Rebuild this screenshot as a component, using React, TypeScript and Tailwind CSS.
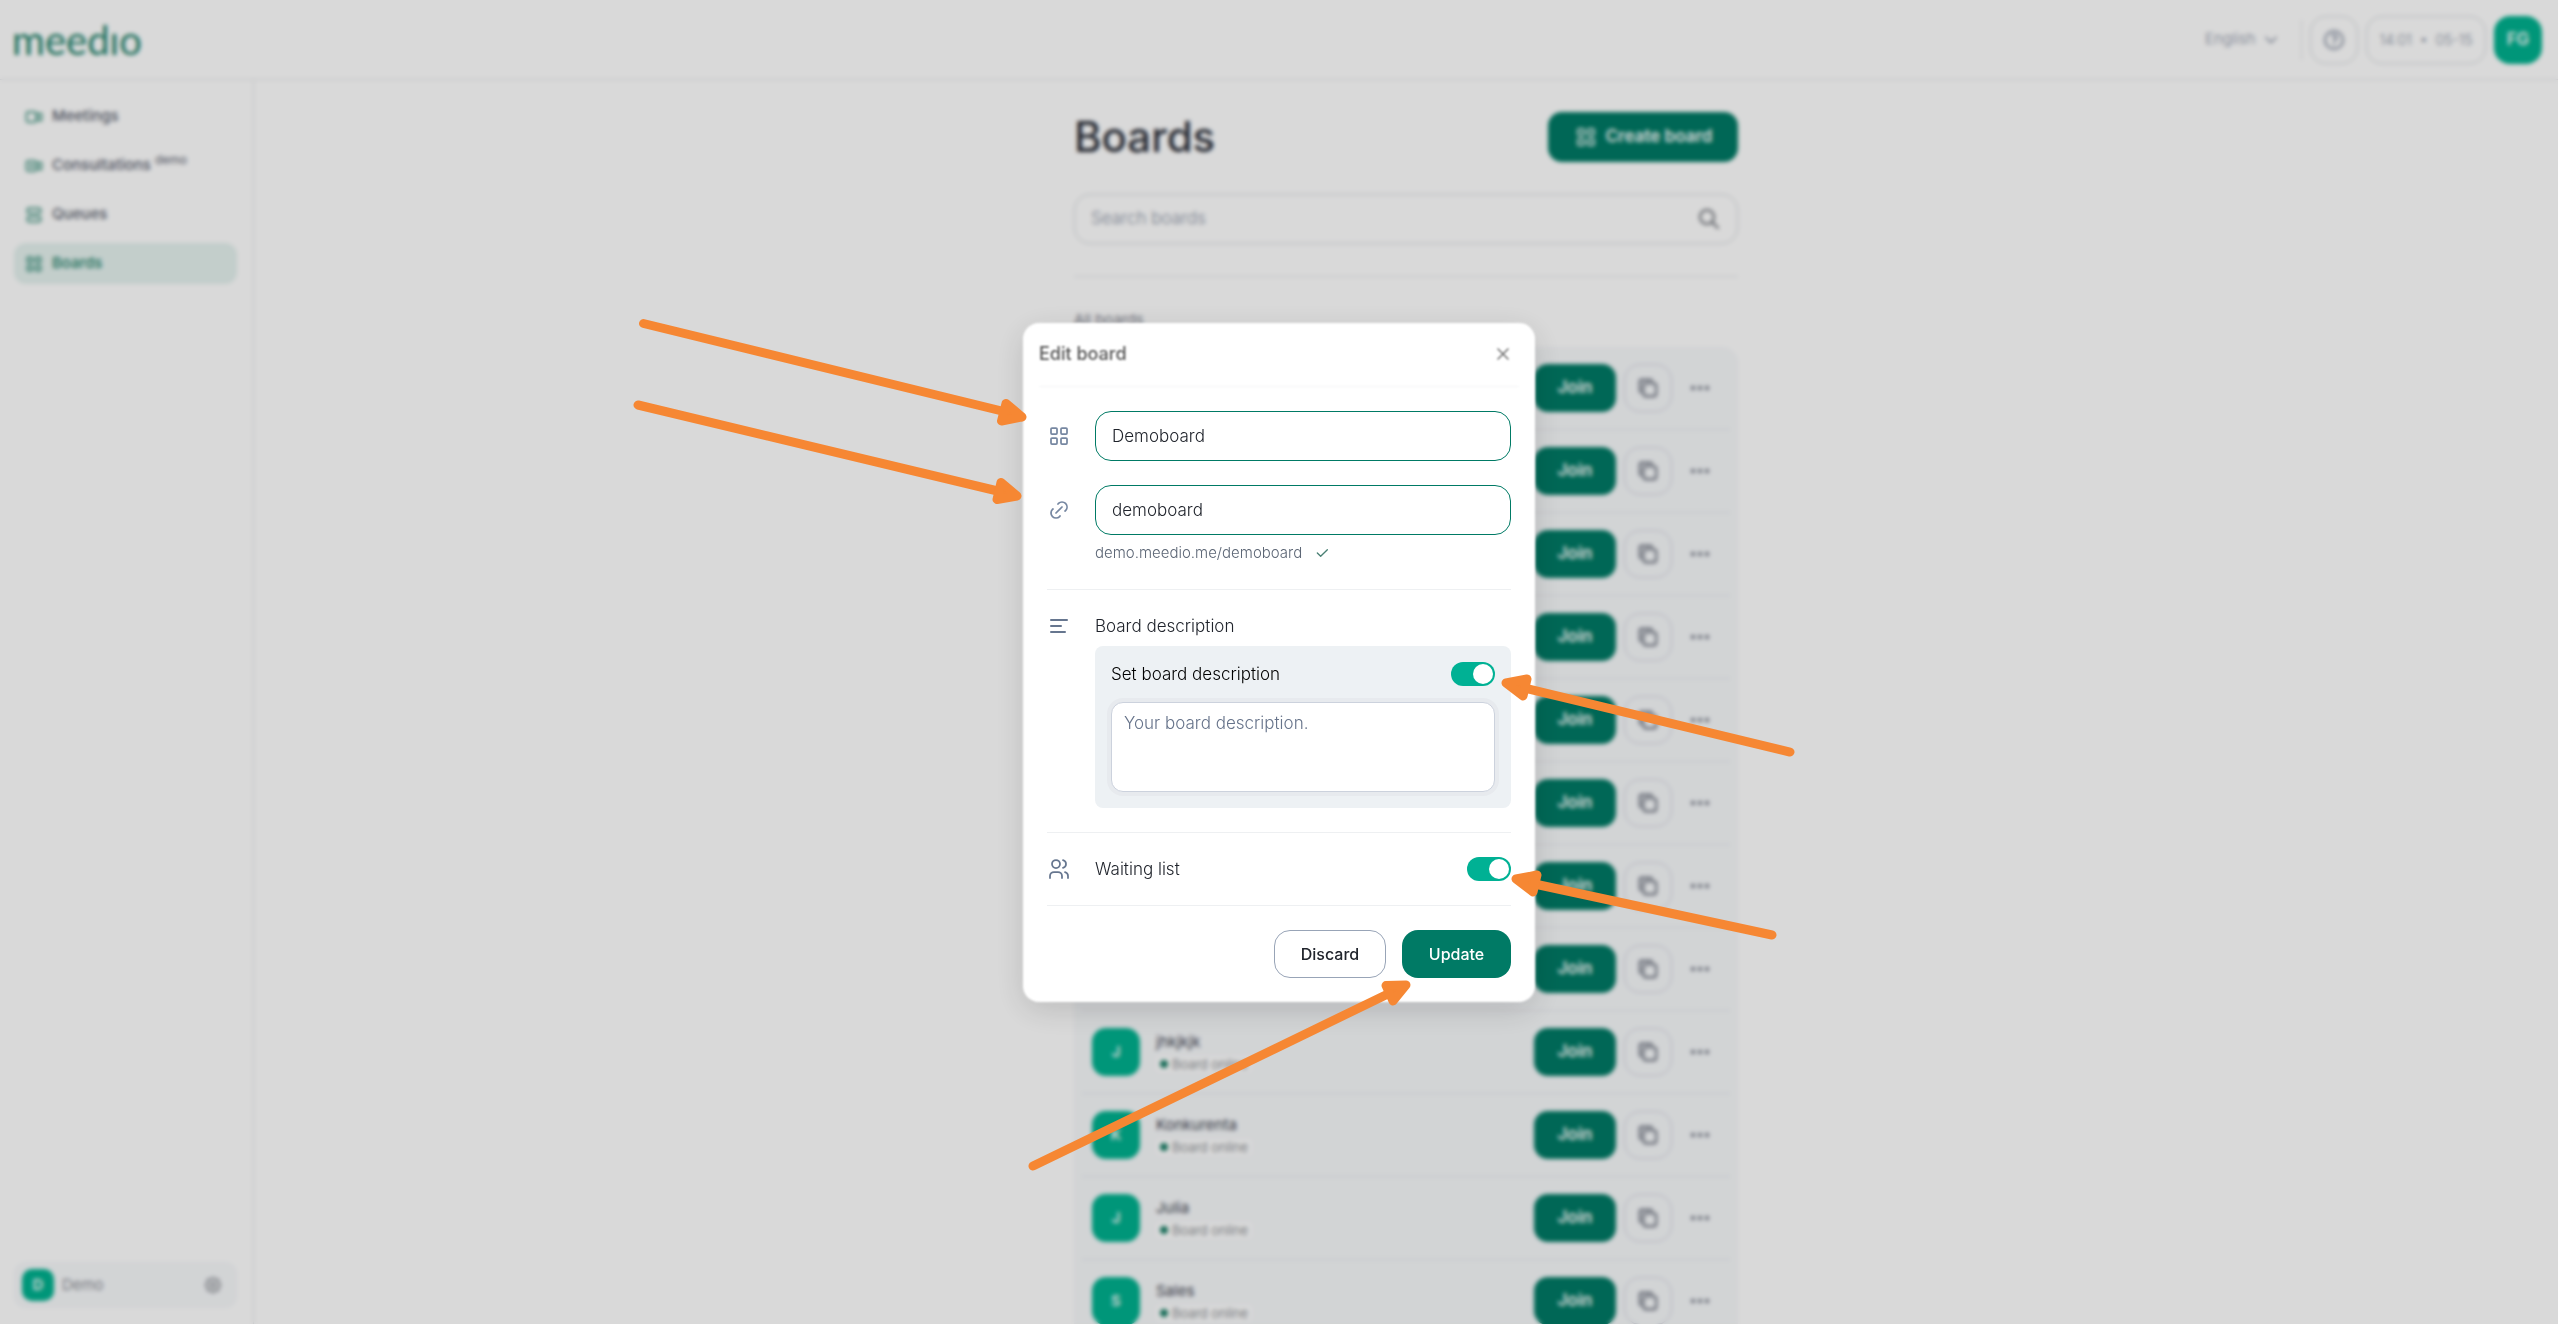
import React, { useState } from "react";
import {
  TbAlignLeft,
  TbCheck,
  TbChevronDown,
  TbCopy,
  TbDots,
  TbHelp,
  TbLayoutGrid,
  TbLayoutList,
  TbLink,
  TbSearch,
  TbSettings,
  TbUsers,
  TbVideo,
  TbVideoPlus,
  TbX,
} from "react-icons/tb";

interface Board {
  id: number;
  name?: string;
}

const navItems = [
  { label: "Meetings", icon: TbVideo },
  { label: "Consultations", icon: TbVideoPlus, tag: "demo" },
  { label: "Queues", icon: TbLayoutList },
  { label: "Boards", icon: TbLayoutGrid, active: true },
];

const boards: Board[] = [
  { id: 1 },
  { id: 2 },
  { id: 3 },
  { id: 4 },
  { id: 5 },
  { id: 6 },
  { id: 7 },
  { id: 8 },
  { id: 9, name: "jhkjkjk" },
  { id: 10, name: "Konkurenta" },
  { id: 11, name: "Julia" },
  { id: 12, name: "Sales" },
];

// shaft and head (tip plus two barbs) of each arrow
const arrows = [
  { line: "M643.5 323.5 L1010 413", head: "M1022 417 L1006 403.5 L1001.5 421 Z" },
  { line: "M638 405 L1006 493", head: "M1017 496 L1001 482.5 L997 499.5 Z" },
  { line: "M1790 752 L1520 687", head: "M1506 683 L1527 679 L1523 696 Z" },
  { line: "M1772 935 L1530 883", head: "M1516 879 L1537 875 L1533 892 Z" },
  { line: "M1033 1166 L1394 991", head: "M1406 985 L1386 985.5 L1393 1001 Z" },
];

function Topbar() {
  return (
    <header className="flex h-20 shrink-0 items-center justify-between border-b border-gray-200 pr-4 pl-3">
      <a href="#" className="font-['Lato',sans-serif] text-[40px] leading-10 text-[#1c7f68]">
        meedıo
      </a>
      <div className="flex items-center gap-2 text-[#8a93a5]">
        <label className="relative mr-3 flex items-center">
          <select
            aria-label="Language"
            className="w-[76px] appearance-none bg-transparent text-[15px] font-light"
          >
            <option>English</option>
          </select>
          <TbChevronDown className="pointer-events-none absolute right-0 size-5" />
        </label>
        <div className="h-10 w-px bg-gray-200" />
        <button
          type="button"
          aria-label="Help"
          className="flex size-12 items-center justify-center rounded-2xl border border-gray-300"
        >
          <TbHelp className="size-6" />
        </button>
        <div className="flex h-12 w-[120px] items-center justify-center rounded-2xl border border-gray-300 text-sm font-light">
          14:01 &nbsp;•&nbsp; 05-15
        </div>
        <button type="button" className="size-12 rounded-2xl bg-[#00b18f] text-[17px] font-semibold text-white">
          FG
        </button>
      </div>
    </header>
  );
}

function Sidebar() {
  return (
    <aside className="flex w-[254px] shrink-0 flex-col justify-between border-r border-gray-200 py-4 pr-4 pl-3.5">
      <nav className="flex flex-col gap-2">
        {navItems.map((item) => (
          <a
            key={item.label}
            href="#"
            className={
              item.active
                ? "flex h-[41px] items-center gap-2 rounded-xl bg-[#e5f2ef] px-2.5 text-[15px] font-medium text-[#1c7f68]"
                : "flex h-[41px] items-center gap-2 rounded-xl px-2.5 text-[15px] font-medium text-[#5c6270]"
            }
          >
            <item.icon className="size-5 stroke-[1.75] text-[#1c7f68]" />
            <span>
              {item.label}
              {item.tag && <sup className="ml-1 text-xs font-normal">{item.tag}</sup>}
            </span>
          </a>
        ))}
      </nav>
      <div className="flex h-[46px] items-center gap-2 rounded-xl bg-[#f7f9fb] px-2 text-[15px] text-[#6b6f76]">
        <span className="flex size-8 items-center justify-center rounded-[10px] bg-[#00b18f] text-[15px] font-semibold text-white">
          D
        </span>
        <span className="flex-1 font-light">Demo</span>
        <button type="button" aria-label="Settings" className="mr-1.5">
          <TbSettings className="size-5 stroke-[1.5]" />
        </button>
      </div>
    </aside>
  );
}

function BoardRow({ board }: { board: Board }) {
  return (
    <li className="flex h-[83px] shrink-0 items-center justify-between border-b border-gray-200 px-2.5">
      {board.name ? (
        <div className="flex items-center gap-4">
          <span className="flex size-12 items-center justify-center rounded-[14px] bg-[#00b18f] text-[15px] font-semibold text-white">
            {board.name[0].toUpperCase()}
          </span>
          <div className="flex flex-col items-start gap-1">
            <span className="text-[15px] leading-5 font-normal text-[#3f4450]">{board.name}</span>
            <span className="flex items-center gap-1 rounded bg-white px-1 text-[13px] leading-4 font-light text-[#6b6f76]">
              <span className="size-2 rounded-full bg-[#1c7f68]" />
              Board online
            </span>
          </div>
        </div>
      ) : (
        <div />
      )}
      <div className="flex items-center gap-2">
        <button type="button" className="h-12 w-[82px] rounded-[14px] bg-[#007a65] text-[17px] font-semibold text-white">
          Join
        </button>
        <button
          type="button"
          aria-label="Copy link"
          className="flex size-12 items-center justify-center rounded-2xl border border-gray-300 text-[#5c6270]"
        >
          <TbCopy className="size-[22px]" />
        </button>
        <button type="button" aria-label="More" className="flex w-10 justify-center text-[#5c6270]">
          <TbDots className="size-6" />
        </button>
      </div>
    </li>
  );
}

interface SwitchProps {
  id: string;
  checked: boolean;
  onChange: (checked: boolean) => void;
}

function Switch({ id, checked, onChange }: SwitchProps) {
  return (
    <input
      id={id}
      type="checkbox"
      role="switch"
      checked={checked}
      onChange={(e) => onChange(e.target.checked)}
      className="flex h-6 w-11 cursor-pointer appearance-none items-center rounded-full bg-gray-300 px-0.5 before:size-5 before:rounded-full before:bg-white checked:justify-end checked:bg-[#00b194]"
    />
  );
}

function EditBoardModal() {
  const [name, setName] = useState("Demoboard");
  const [slug, setSlug] = useState("demoboard");
  const [description, setDescription] = useState("");
  const [hasDescription, setHasDescription] = useState(true);
  const [waitingList, setWaitingList] = useState(true);

  return (
    <div role="dialog" aria-labelledby="edit-title" className="relative w-full max-w-[512px]">
      <div className="absolute inset-0 rounded-2xl bg-white shadow-[0_8px_32px_rgba(0,0,0,0.14)] blur-[1px]" />
      <div className="relative">
        <div className="mx-4 flex h-16 items-center justify-between border-b border-gray-100 blur-[1px]">
          <h2 id="edit-title" className="text-lg font-medium text-[#555]">
            Edit board
          </h2>
          <button type="button" aria-label="Close" className="mr-1.5 text-[#777]">
            <TbX className="size-5" />
          </button>
        </div>

        <form className="px-6 py-6 text-[17px] leading-6 font-light text-[#20242c]" onSubmit={(e) => e.preventDefault()}>
          <div className="flex items-center gap-6">
            <TbLayoutGrid className="size-6 shrink-0 stroke-[1.75] text-[#7687a1]" />
            <input
              aria-label="Board name"
              value={name}
              onChange={(e) => setName(e.target.value)}
              className="h-[50px] min-w-0 flex-1 rounded-2xl border border-[#007a65] px-4"
            />
          </div>
          <div className="mt-6 flex items-center gap-6">
            <TbLink className="size-6 shrink-0 stroke-[1.75] text-[#7687a1]" />
            <input
              aria-label="Board link"
              value={slug}
              onChange={(e) => setSlug(e.target.value)}
              className="h-[50px] min-w-0 flex-1 rounded-2xl border border-[#007a65] px-4"
            />
          </div>
          <div className="mt-1.5 flex h-6 items-center gap-3 pl-12 text-[15px] text-[#5c6675]">
            demo.meedio.me/{slug}
            <TbCheck className="size-4 text-[#4a8074]" />
          </div>

          <div className="mt-6 flex items-center gap-6 border-t border-[#eef0f2] pt-6">
            <TbAlignLeft className="size-6 text-[#66768f]" />
            Board description
          </div>
          <div className="mt-2 ml-12 rounded-lg bg-[#edf1f4] p-4">
            <div className="flex items-center justify-between text-black">
              <label htmlFor="set-description">Set board description</label>
              <Switch id="set-description" checked={hasDescription} onChange={setHasDescription} />
            </div>
            <textarea
              aria-label="Board description"
              placeholder="Your board description."
              value={description}
              onChange={(e) => setDescription(e.target.value)}
              className="mt-4 block h-[90px] w-full resize-none rounded-xl border border-[#ccd2dd] bg-white px-3 py-2 ring-4 ring-[#e7eaee] placeholder:text-[#66738a]"
            />
          </div>

          <div className="mt-6 flex h-[74px] items-center gap-6 border-y border-[#eef0f2]">
            <TbUsers className="size-6 stroke-[1.75] text-[#66768f]" />
            <label htmlFor="waiting-list" className="flex-1">
              Waiting list
            </label>
            <Switch id="waiting-list" checked={waitingList} onChange={setWaitingList} />
          </div>

          <div className="mt-6 flex justify-end gap-4 text-base font-medium">
            <button type="button" className="h-12 w-28 rounded-2xl border border-[#98a4b7]">
              Discard
            </button>
            <button type="submit" className="h-12 w-[109px] rounded-2xl bg-[#007a65] text-white">
              Update
            </button>
          </div>
        </form>
      </div>
    </div>
  );
}

export default function App() {
  return (
    <div className="flex h-screen flex-col overflow-hidden bg-white font-['Inter',sans-serif]">
      <Topbar />
      <div className="flex min-h-0 flex-1">
        <Sidebar />
        <main className="flex-1 overflow-hidden px-6 pt-8">
          <div className="mx-auto max-w-[664px]">
            <div className="flex items-center justify-between">
              <h1 className="text-[42px] leading-12 font-medium text-[#2c303a]">Boards</h1>
              <button
                type="button"
                className="flex h-[50px] w-[190px] items-center justify-center gap-2 rounded-[14px] bg-[#007a65] text-[17px] font-semibold text-white"
              >
                <TbLayoutGrid className="size-6 stroke-[1.75]" />
                Create board
              </button>
            </div>
            <label className="mt-8 flex h-[50px] items-center rounded-2xl border border-gray-300 px-4">
              <input
                type="search"
                aria-label="Search boards"
                placeholder="Search boards"
                className="min-w-0 flex-1 text-[17px] font-light placeholder:text-[#8a93a5]"
              />
              <TbSearch className="size-6 text-[#6b6f76]" />
            </label>
            <div className="mt-8 border-t border-gray-200 pt-8 text-[15px] leading-[22px] font-light text-[#5c6270]">
              All boards
            </div>
            <ul className="mt-4 flex flex-col rounded-2xl bg-[#f7f9fb] px-2">
              {boards.map((board) => (
                <BoardRow key={board.id} board={board} />
              ))}
            </ul>
          </div>
        </main>
      </div>

      <div className="fixed inset-0 flex items-center justify-center bg-black/15 backdrop-blur-[2px]">
        <EditBoardModal />
      </div>

      <svg
        aria-hidden="true"
        viewBox="0 0 2558 1324"
        className="pointer-events-none fixed inset-0 size-full fill-none stroke-[#f68733] stroke-[9]"
        strokeLinecap="round"
        strokeLinejoin="round"
      >
        {arrows.map((arrow) => (
          <g key={arrow.line}>
            <path d={arrow.line} />
            <path d={arrow.head} fill="#f68733" />
          </g>
        ))}
      </svg>
    </div>
  );
}
